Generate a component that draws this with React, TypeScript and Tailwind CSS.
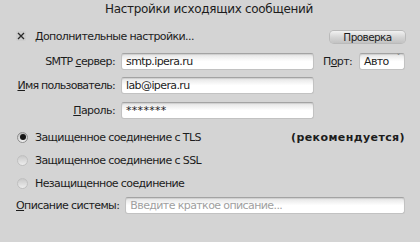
import React from "react";

const Field = ({ children, className = "" }: { children?: React.ReactNode; className?: string }) => (
  <div
    className={
      "h-[17px] rounded-[3px] border border-[#c2c2c2] border-t-[#a3a3a3] bg-gradient-to-b from-[#e4e4e4] via-white to-white shadow-[inset_0_1px_1px_rgba(0,0,0,0.10)] flex items-center px-[4px] text-[11px] tracking-[-0.6px] " +
      className
    }
  >
    {children}
  </div>
);

const Radio = ({ checked }: { checked?: boolean }) => (
  <div
    className={
      "w-[11px] h-[11px] rounded-full border flex items-center justify-center " +
      (checked
        ? "border-[#8e8e8e] bg-gradient-to-b from-[#bdbdbd] to-[#f0f0f0]"
        : "border-[#c0c0c0] bg-gradient-to-b from-[#c9c9c9] to-[#ededed]")
    }
  >
    {checked && <div className="w-[6px] h-[6px] rounded-full bg-[#151515]" />}
  </div>
);

export default function App() {
  return (
    <div
      className="w-[420px] h-[242px] bg-[#d4d4d4] text-[#1c1c1c] text-[11px] leading-none overflow-hidden tracking-[-0.6px]"
      style={{ fontFamily: '"DejaVu Sans", "Liberation Sans", sans-serif' }}
    >
      <div className="h-[17px] flex items-center pl-[105px] text-[12px] tracking-[-0.3px]">Настройки исходящих сообщений</div>

      <div className="mt-[12px] h-[14px] flex items-center pl-[16px] pr-[15px]">
        <div className="w-[10px] h-[10px] flex items-center justify-center bg-[#cdcdcd] rounded-[2px]">
          <svg width="8" height="8" viewBox="0 0 8 8">
            <path d="M1 1 L7 7 M7 1 L1 7" stroke="#2a2a2a" strokeWidth="1.3" />
          </svg>
        </div>
        <span className="ml-[9px]">Дополнительные настройки...</span>
        <div className="ml-auto mt-[2px] w-[75px] h-[12px] rounded-[4px] bg-gradient-to-b from-[#f2f2f2] via-[#d6d6d6] to-[#c2c2c2] shadow-[0_0_0_1px_rgba(0,0,0,0.12)] flex items-center justify-center text-[10.5px]">
          Проверка
        </div>
      </div>

      <div className="mt-[9px] flex items-center h-[18px]">
        <div className="w-[115px] text-right">
          SMTP <span className="underline">с</span>ервер:
        </div>
        <Field className="ml-[6px] w-[193px]">smtp.ipera.ru</Field>
        <div className="ml-[9px]">
          П<span className="underline">о</span>рт:
        </div>
        <Field className="ml-auto mr-[15px] w-[46px] relative">
          Авто
          <span className="absolute right-[4px] top-[1px] text-[8px] text-[#777]">ˇ</span>
        </Field>
      </div>

      <div className="mt-[6px] flex items-center h-[18px]">
        <div className="w-[115px] text-right tracking-[-0.75px]">
          <span className="underline">И</span>мя пользователь:
        </div>
        <Field className="ml-[6px] w-[193px]">lab@ipera.ru</Field>
      </div>

      <div className="mt-[7px] flex items-center h-[18px]">
        <div className="w-[115px] text-right">
          <span className="underline">П</span>ароль:
        </div>
        <Field className="ml-[6px] w-[193px] items-start pt-[2px] text-[9px] tracking-[0.3px]">*******</Field>
      </div>

      <div className="mt-[10px] flex items-center h-[16px] pl-[17px] pr-[15px]">
        <Radio checked />
        <span className="ml-[7px]">Защищенное соединение с TLS</span>
        <span className="ml-auto font-bold tracking-[0.4px]">(рекомендуется)</span>
      </div>
      <div className="mt-[7px] flex items-center h-[16px] pl-[17px]">
        <Radio />
        <span className="ml-[7px]">Защищенное соединение с SSL</span>
      </div>
      <div className="mt-[7px] flex items-center h-[16px] pl-[17px]">
        <Radio />
        <span className="ml-[7px]">Незащищенное соединение</span>
      </div>

      <div className="mt-[5px] flex items-center h-[18px] pl-[16px] pr-[15px]">
        <div>
          <span className="underline">О</span>писание системы:
        </div>
        <Field className="ml-[6px] flex-1 text-[#a0a0a0]">Введите краткое описание...</Field>
      </div>
    </div>
  );
}
